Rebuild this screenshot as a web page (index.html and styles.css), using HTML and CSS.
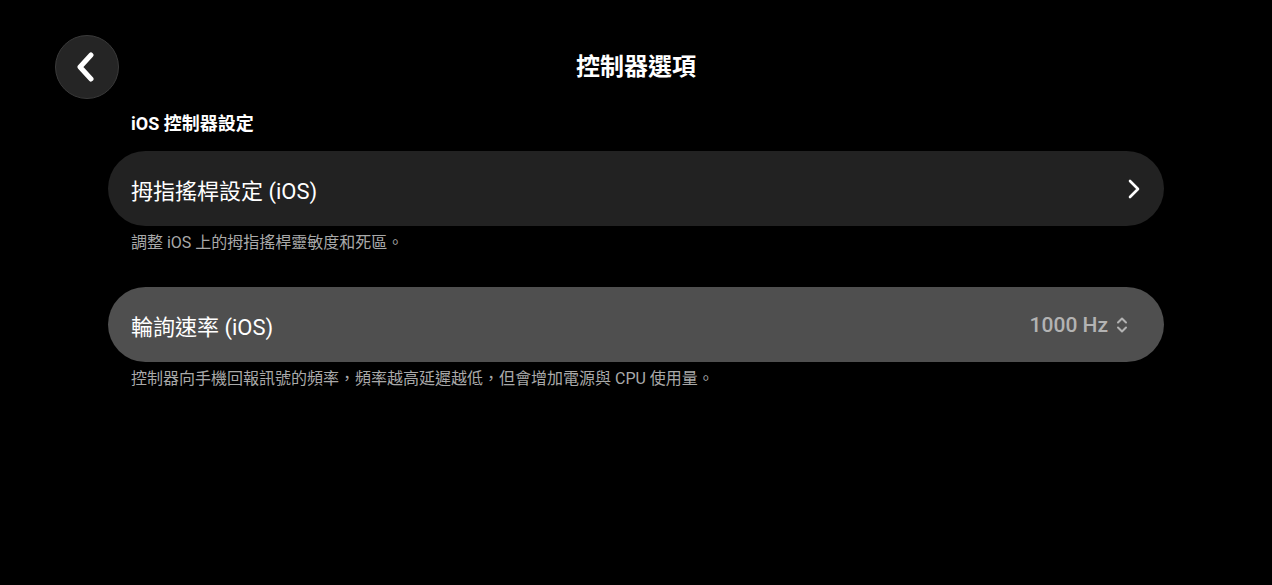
FILE: index.html
```html
<!DOCTYPE html>
<html lang="zh-Hant">

<head>
  <meta charset="UTF-8">
  <meta name="viewport" content="width=device-width, initial-scale=1.0">
  <title>控制器選項</title>
  <link rel="stylesheet" href="styles.css">
</head>

<body>
  <!-- 頂部列 -->
  <div class="topbar">
    <div class="back">
      <svg width="24" height="30" viewBox="0 0 24 30">
        <path d="M16 3 L5 15 L16 27" fill="none" stroke="#fff" stroke-width="5" stroke-linecap="round" stroke-linejoin="round" />
      </svg>
    </div>
    <div class="title">控制器選項</div>
  </div>

  <div class="content">
    <div class="section-title">iOS 控制器設定</div>

    <div class="row">
      <span class="label">拇指搖桿設定 (iOS)</span>
      <svg class="chev" width="16" height="22" viewBox="0 0 16 22">
        <path d="M4 3 L12 11 L4 19" fill="none" stroke="#fff" stroke-width="2.6" stroke-linecap="round" stroke-linejoin="round" />
      </svg>
    </div>
    <div class="hint">調整 iOS 上的拇指搖桿靈敏度和死區。</div>

    <div class="row row-light">
      <span class="label">輪詢速率 (iOS)</span>
      <span class="value">1000 Hz
        <svg width="14" height="18" viewBox="0 0 14 18">
          <path d="M3 6.5 L7 2.5 L11 6.5 M3 11.5 L7 15.5 L11 11.5" fill="none" stroke="#b3b3b3" stroke-width="2" stroke-linecap="round" stroke-linejoin="round" />
        </svg>
      </span>
    </div>
    <div class="hint">控制器向手機回報訊號的頻率，頻率越高延遲越低，但會增加電源與 CPU 使用量。</div>
  </div>
</body>

</html>
```

FILE: styles.css
```css
html,
body {
  margin: 0;
  background: #000;
  color: #fff;
  font-family: Roboto, "Noto Sans CJK TC", sans-serif;
}

.topbar {
  position: relative;
  height: 100px;
  padding: 35px 0 0 55px;
  box-sizing: border-box;
}

.back {
  width: 64px;
  height: 64px;
  box-sizing: border-box;
  border-radius: 50%;
  background: #252525;
  border: 1px solid #3a3a3a;
  display: flex;
  align-items: center;
  justify-content: center;
}

.title {
  position: absolute;
  left: 0;
  right: 0;
  top: 51px;
  text-align: center;
  font-size: 24px;
  font-weight: bold;
  line-height: 32px;
}

.content {
  margin: 0 108px;
}

.section-title {
  padding-left: 23px;
  font-size: 18px;
  font-weight: bold;
  line-height: 24px;
  margin-top: 12px;
  margin-bottom: 15px;
}

.row {
  height: 75px;
  border-radius: 38px;
  background: #222;
  display: flex;
  align-items: center;
  justify-content: space-between;
  padding: 0 22px 0 23px;
}

.row-light {
  background: #4f4f4f;
}

.label {
  font-size: 22px;
}

.value {
  display: flex;
  align-items: center;
  gap: 7px;
  margin-right: 13px;
  font-size: 21px;
  font-weight: 500;
  color: #b3b3b3;
}

.hint {
  padding-left: 23px;
  font-size: 16px;
  color: #a9a9a9;
  line-height: 20px;
  margin-top: 7px;
  margin-bottom: 34px;
}
```
